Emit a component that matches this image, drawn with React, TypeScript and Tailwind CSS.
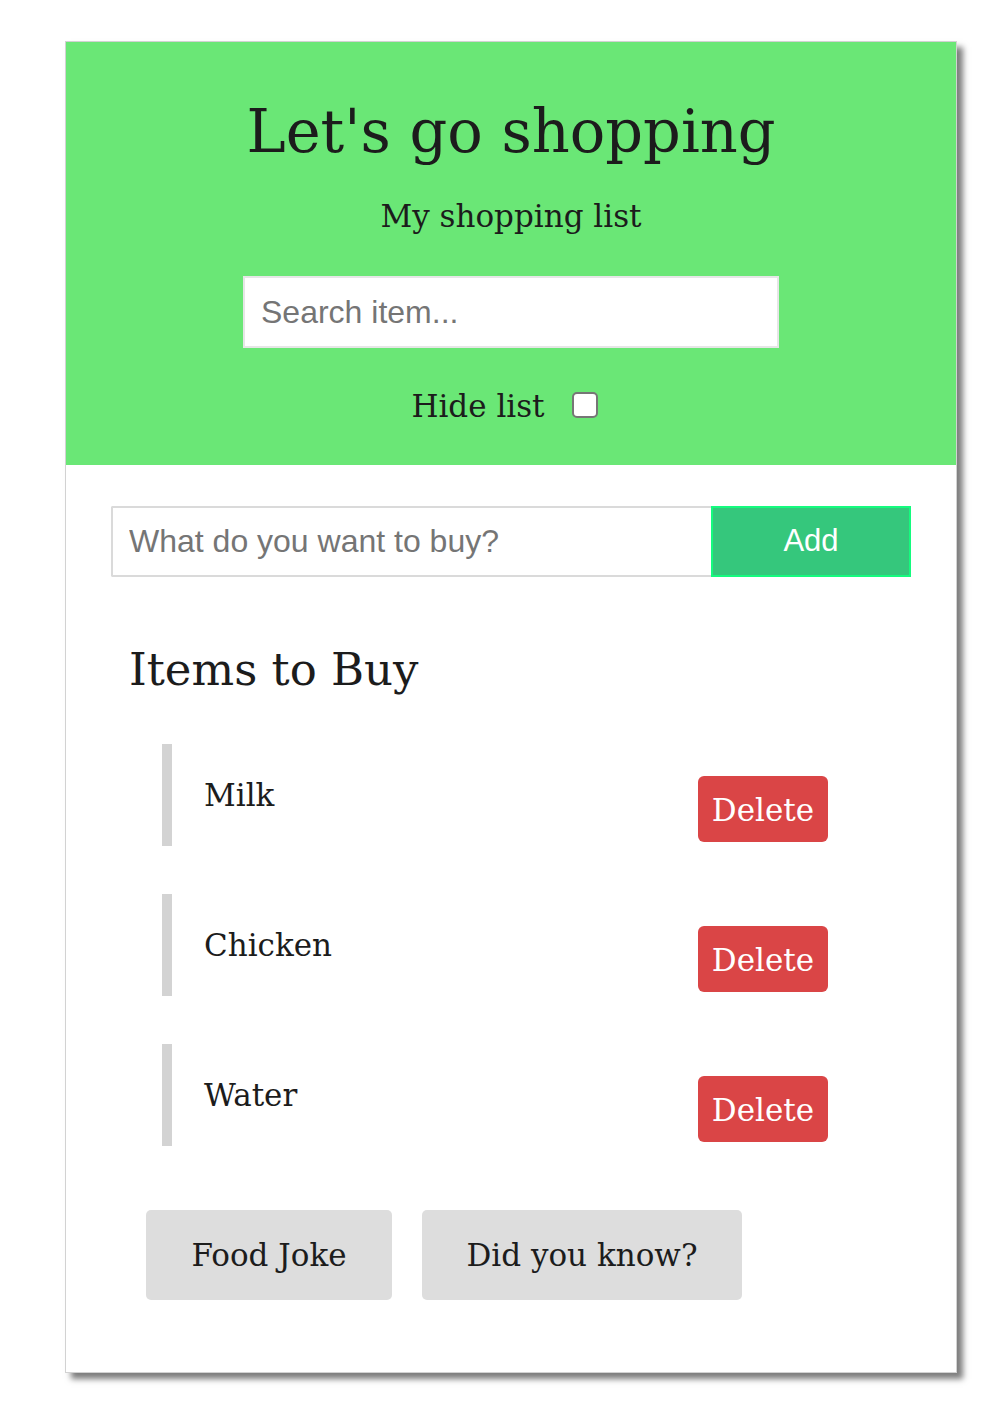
import React from "react";

const serif = "font-['DejaVu_Serif',serif]";
const sans = "font-['Liberation_Sans',Arial,sans-serif]";

function Item({ name }: { name: string }) {
  return (
    <div className="flex h-[102px] w-[666px] items-start justify-between border-l-[10px] border-[#d3d3d3] pl-[32px]">
      <span className={`${serif} mt-[36px] text-[31px] leading-none text-[#1c1c1c]`}>{name}</span>
      <button className={`${serif} mt-[32px] flex h-[66px] w-[130px] items-center justify-center rounded-[6px] bg-[#da4546] pt-[2px] text-[31px] leading-none text-white`}>
        Delete
      </button>
    </div>
  );
}

export default function App() {
  return (
    <div className="min-h-[1414px] bg-white pt-[41px]">
      <div className="ml-[65px] w-[892px] border border-[#d2d2d2] bg-white shadow-[6px_6px_6px_#7d7d7d]">
        <header className="flex flex-col items-center bg-[#6ae776] pb-[43px] pt-[60px]">
          <h1 className={`${serif} text-[59px] leading-none text-[#1c1c1c]`}>Let's go shopping</h1>
          <p className={`${serif} mt-[40px] text-[31px] leading-none text-[#1c1c1c]`}>My shopping list</p>
          <input
            placeholder="Search item..."
            className={`${sans} mt-[44px] h-[72px] w-[536px] border-2 border-[#e6e6e6] bg-white px-[16px] text-[32px] text-[#1c1c1c] outline-none placeholder:text-[#757575]`}
          />
          <div className="mt-[43px] flex items-start gap-[27px] pr-[13px]">
            <span className={`${serif} text-[31px] leading-none text-[#1c1c1c]`}>Hide list</span>
            <input
              type="checkbox"
              readOnly
              className="mt-[1px] h-[26px] w-[26px] appearance-none rounded-[5px] border-2 border-[#767676] bg-white"
            />
          </div>
        </header>
        <div className="pb-[72px] pt-[41px]">
          <div className="mx-auto flex h-[71px] w-[800px]">
            <input
              placeholder="What do you want to buy?"
              className={`${sans} h-full w-[600px] rounded-l-[2px] border-2 border-r-0 border-[#dadada] bg-white px-[16px] text-[32px] text-[#1c1c1c] outline-none placeholder:text-[#757575]`}
            />
            <button className={`${sans} h-full w-[200px] border-2 border-[#14fb7e] bg-[#35c77c] text-[31px] text-white`}>
              Add
            </button>
          </div>
          <h2 className={`${serif} ml-[63px] mt-[70px] text-[45px] leading-none text-[#1c1c1c]`}>Items to Buy</h2>
          <div className="ml-[96px] mt-[52px] flex flex-col gap-[48px]">
            <Item name="Milk" />
            <Item name="Chicken" />
            <Item name="Water" />
          </div>
          <div className="ml-[80px] mt-[64px] flex gap-[30px]">
            <button className={`${serif} flex h-[90px] w-[246px] items-center justify-center rounded-[5px] bg-[#dddddd] text-[31px] leading-none text-[#1c1c1c]`}>
              Food Joke
            </button>
            <button className={`${serif} flex h-[90px] w-[320px] items-center justify-center rounded-[5px] bg-[#dddddd] text-[31px] leading-none text-[#1c1c1c]`}>
              Did you know?
            </button>
          </div>
        </div>
      </div>
    </div>
  );
}
